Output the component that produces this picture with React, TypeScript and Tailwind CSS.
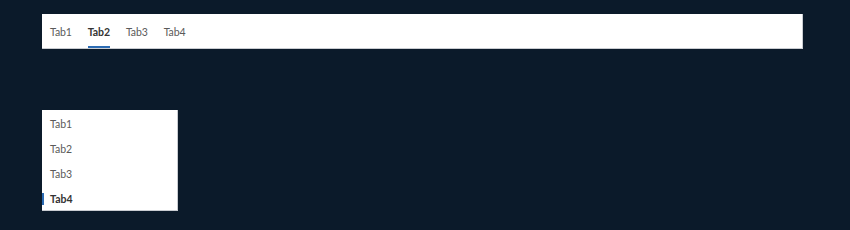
import React, { useState } from 'react';

const tabs = ['Tab1', 'Tab2', 'Tab3', 'Tab4'];

export default function App() {
  const [top, setTop] = useState(1);
  const [side, setSide] = useState(3);

  return (
    <div
      className="min-h-[230px] w-full bg-[#0b1a2a] pl-[42px] pr-[47px] pt-[14px]"
      style={{ fontFamily: '"Segoe UI", Lato, "Liberation Sans", sans-serif' }}
    >
      <div className="flex h-[35px] bg-white border-r border-b border-[#c9ccd1]">
        {tabs.map((t, i) => (
          <button
            key={t}
            onClick={() => setTop(i)}
            className="flex h-full px-2 text-[10.5px] leading-none"
          >
            <span
              className={`flex h-full items-center border-b-2 pt-[4px] tracking-[-0.1px] ${
                top === i ? 'border-[#2b6bb3] font-bold text-[#333]' : 'border-transparent text-[#5a5a5a]'
              }`}
            >
              {t}
            </span>
          </button>
        ))}
      </div>

      <div className="mt-[61px] flex w-[136px] flex-col bg-white border-r border-b border-[#c9ccd1]">
        {tabs.map((t, i) => (
          <button
            key={t}
            onClick={() => setSide(i)}
            className="flex h-[25px] items-center pt-[3px] text-[10.5px] leading-none"
          >
            <span className={`h-[12px] w-[2px] ${side === i ? 'bg-[#2b6bb3]' : 'bg-transparent'}`} />
            <span className={`pl-[6px] ${side === i ? 'font-bold text-[#333]' : 'text-[#5a5a5a]'}`}>{t}</span>
          </button>
        ))}
      </div>
    </div>
  );
}
